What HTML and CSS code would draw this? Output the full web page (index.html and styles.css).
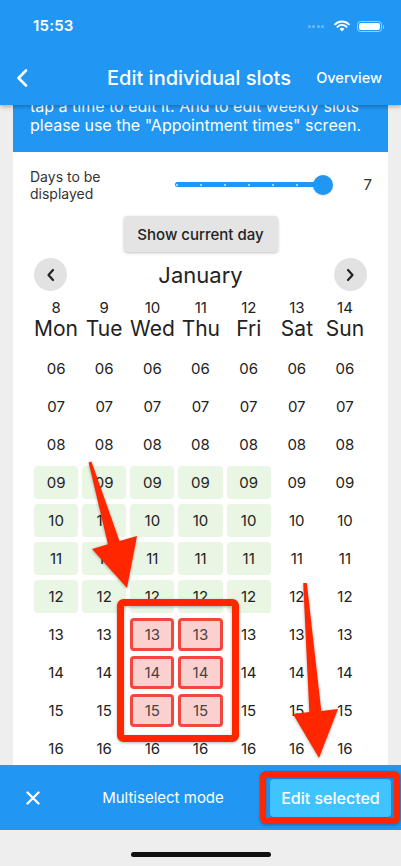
FILE: index.html
```html
<!DOCTYPE html>
<html lang="en">
<head>
    <meta charset="UTF-8">
    <meta name="viewport" content="width=device-width, initial-scale=1.0">
    <title>Edit individual slots</title>
    <link rel="stylesheet" href="styles.css">
</head>
<body>
    <header class="topbar">
        <div class="status">
            <span class="clock">15:53</span>
            <div class="status-icons">
                <span class="signal"><i></i><i></i><i></i><i></i></span>
                <svg class="wifi" width="16" height="12" viewBox="0 0 16 12">
                    <path d="M8 11.5 L5.6 9 A3.4 3.4 0 0 1 10.4 9 Z" fill="#fff"/>
                    <path d="M3.4 6.8 A6.5 6.5 0 0 1 12.6 6.8" stroke="#fff" stroke-width="1.9" fill="none" stroke-linecap="round"/>
                    <path d="M1.1 4.3 A9.8 9.8 0 0 1 14.9 4.3" stroke="#fff" stroke-width="1.9" fill="none" stroke-linecap="round"/>
                </svg>
                <span class="battery"><i></i></span>
            </div>
        </div>
        <div class="toolbar">
            <svg class="back" width="12" height="18" viewBox="0 0 12 18">
                <path d="M10 1.5 L2.5 9 L10 16.5" stroke="#fff" stroke-width="2.6" fill="none" stroke-linecap="round" stroke-linejoin="round"/>
            </svg>
            <h1>Edit individual slots</h1>
            <span class="overview">Overview</span>
        </div>
    </header>

    <main class="content">
        <div class="card">
            <div class="notice">
                Here you can see the slots for single days,<br>
                tap a time to edit it. And to edit weekly slots<br>
                please use the "Appointment times" screen.
            </div>

            <div class="days-setting">
                <span class="days-label">Days to be<br>displayed</span>
                <div class="slider">
                    <div class="track">
                        <i></i><i></i><i></i><i></i><i></i><i></i><i></i>
                    </div>
                </div>
                <span class="days-value">7</span>
            </div>

            <div class="today-row">
                <button class="today-btn">Show current day</button>
            </div>

            <div class="month-row">
                <span class="round-btn">
                    <svg width="10" height="14" viewBox="0 0 10 14"><path d="M7 2 L2.5 7 L7 12" stroke="#222" stroke-width="2.2" fill="none" stroke-linecap="round" stroke-linejoin="round"/></svg>
                </span>
                <span class="month">January</span>
                <span class="round-btn">
                    <svg width="10" height="14" viewBox="0 0 10 14"><path d="M3 2 L7.5 7 L3 12" stroke="#222" stroke-width="2.2" fill="none" stroke-linecap="round" stroke-linejoin="round"/></svg>
                </span>
            </div>

            <div class="week">
                <div class="day"><span class="num">8</span><span class="name">Mon</span></div>
                <div class="day"><span class="num">9</span><span class="name">Tue</span></div>
                <div class="day"><span class="num">10</span><span class="name">Wed</span></div>
                <div class="day"><span class="num">11</span><span class="name">Thu</span></div>
                <div class="day"><span class="num">12</span><span class="name">Fri</span></div>
                <div class="day"><span class="num">13</span><span class="name">Sat</span></div>
                <div class="day"><span class="num">14</span><span class="name">Sun</span></div>
            </div>

            <div class="slots">
                <span class="slot">06</span><span class="slot">06</span><span class="slot">06</span><span class="slot">06</span><span class="slot">06</span><span class="slot">06</span><span class="slot">06</span>
                <span class="slot">07</span><span class="slot">07</span><span class="slot">07</span><span class="slot">07</span><span class="slot">07</span><span class="slot">07</span><span class="slot">07</span>
                <span class="slot">08</span><span class="slot">08</span><span class="slot">08</span><span class="slot">08</span><span class="slot">08</span><span class="slot">08</span><span class="slot">08</span>
                <span class="slot open">09</span><span class="slot open">09</span><span class="slot open">09</span><span class="slot open">09</span><span class="slot open">09</span><span class="slot">09</span><span class="slot">09</span>
                <span class="slot open">10</span><span class="slot open">10</span><span class="slot open">10</span><span class="slot open">10</span><span class="slot open">10</span><span class="slot">10</span><span class="slot">10</span>
                <span class="slot open">11</span><span class="slot open">11</span><span class="slot open">11</span><span class="slot open">11</span><span class="slot open">11</span><span class="slot">11</span><span class="slot">11</span>
                <span class="slot open">12</span><span class="slot open">12</span><span class="slot open">12</span><span class="slot open">12</span><span class="slot open">12</span><span class="slot">12</span><span class="slot">12</span>
                <span class="slot">13</span><span class="slot">13</span><span class="slot picked">13</span><span class="slot picked">13</span><span class="slot">13</span><span class="slot">13</span><span class="slot">13</span>
                <span class="slot">14</span><span class="slot">14</span><span class="slot picked">14</span><span class="slot picked">14</span><span class="slot">14</span><span class="slot">14</span><span class="slot">14</span>
                <span class="slot">15</span><span class="slot">15</span><span class="slot picked">15</span><span class="slot picked">15</span><span class="slot">15</span><span class="slot">15</span><span class="slot">15</span>
                <span class="slot">16</span><span class="slot">16</span><span class="slot">16</span><span class="slot">16</span><span class="slot">16</span><span class="slot">16</span><span class="slot">16</span>
                <span class="slot">17</span><span class="slot">17</span><span class="slot">17</span><span class="slot">17</span><span class="slot">17</span><span class="slot">17</span><span class="slot">17</span>
            </div>
        </div>
    </main>

    <footer class="multibar">
        <svg class="close" width="14" height="14" viewBox="0 0 14 14">
            <path d="M1.5 1.5 L12.5 12.5 M12.5 1.5 L1.5 12.5" stroke="#fff" stroke-width="2.3" stroke-linecap="round"/>
        </svg>
        <span class="mode">Multiselect mode</span>
        <button class="edit-btn">Edit selected</button>
    </footer>
    <div class="home"><span class="home-bar"></span></div>

    <!-- screenshot annotations drawn on top -->
    <svg class="marks" width="401" height="866" viewBox="0 0 401 866">
        <rect x="120.5" y="602.5" width="115" height="136" rx="3" fill="none" stroke="#ff2600" stroke-width="7"/>
        <rect x="263" y="774" width="134" height="47" rx="3" fill="none" stroke="#ff2600" stroke-width="6"/>
        <polygon points="88.6,462.4 107.9,544.3 92,549 127,588 137,536 119.5,540.9 91.4,461.6" fill="#ff2600"/>
        <polygon points="303.2,583.1 309.3,712 293,714 319,758 338,709 321.3,711 306.8,582.9" fill="#ff2600"/>
    </svg>
</body>
</html>
```

FILE: styles.css
```css
* {
    box-sizing: border-box;
}
body {
    margin: 0;
    width: 401px;
    height: 866px;
    overflow: hidden;
    display: flex;
    flex-direction: column;
    background-color: #eeeeee;
    font-family: 'Inter', 'Roboto', sans-serif;
    color: #222;
    position: relative;
}
.topbar {
    height: 105px;
    flex: none;
    background-color: #2196F3;
    color: white;
    box-shadow: 0 2px 4px rgba(0,0,0,0.25);
    position: relative;
    z-index: 2;
}
.status {
    height: 50px;
    display: flex;
    align-items: center;
    justify-content: space-between;
    padding: 0 19px 0 33px;
}
.clock {
    font-size: 15px;
    font-weight: 600;
    letter-spacing: 0.2px;
}
.status-icons {
    display: flex;
    align-items: center;
    gap: 7px;
    padding-top: 2px;
}
.signal {
    display: flex;
    gap: 1.5px;
    margin-right: 3px;
}
.signal i {
    width: 3px;
    height: 3px;
    border-radius: 50%;
    background-color: rgba(255,255,255,0.35);
}
.battery {
    width: 25px;
    height: 11px;
    border: 1px solid rgba(255,255,255,0.55);
    border-radius: 3.5px;
    padding: 1px;
    display: flex;
    position: relative;
}
.battery i {
    flex: 1;
    background-color: white;
    border-radius: 2px;
}
.battery::after {
    content: "";
    position: absolute;
    right: -3px;
    top: 3px;
    width: 1.5px;
    height: 4px;
    border-radius: 0 1px 1px 0;
    background-color: rgba(255,255,255,0.55);
}
.toolbar {
    height: 55px;
    display: grid;
    grid-template-columns: 1fr auto 1fr;
    align-items: center;
    padding: 0 19px 0 16px;
}
.toolbar h1 {
    margin: 0;
    font-size: 20px;
    font-weight: 500;
}
.overview {
    justify-self: end;
    font-size: 14.5px;
    font-weight: 500;
}
.content {
    flex: 1;
    overflow: hidden;
    padding: 0 13px;
}
.card {
    margin-top: -44px;
    background-color: white;
}
.notice {
    background-color: #2196F3;
    color: white;
    font-size: 16px;
    line-height: 19.5px;
    padding: 16px 17px;
    white-space: nowrap;
}
.days-setting {
    display: flex;
    align-items: center;
    padding: 16px 16px 0 17px;
}
.days-label {
    width: 125px;
    font-size: 14px;
    line-height: 17px;
    color: #333;
}
.slider {
    flex: 1;
    padding: 0 19px 0 20px;
}
.track {
    height: 5px;
    border-radius: 3px;
    background-color: #2196F3;
    display: flex;
    align-items: center;
    justify-content: space-between;
    padding: 0 1px;
    position: relative;
}
.track i {
    width: 2px;
    height: 2px;
    border-radius: 50%;
    background-color: rgba(255,255,255,0.8);
}
.track::after {
    content: "";
    position: absolute;
    right: -10px;
    top: -7.5px;
    width: 20px;
    height: 20px;
    border-radius: 50%;
    background-color: #2196F3;
    box-shadow: 0 1px 2px rgba(0,0,0,0.15);
}
.days-value {
    width: 30px;
    text-align: right;
    font-size: 15px;
    color: #333;
}
.today-row {
    display: flex;
    justify-content: center;
    padding-top: 14.5px;
}
.today-btn {
    width: 154px;
    height: 36px;
    border: none;
    border-radius: 4px;
    background-color: #e4e4e4;
    box-shadow: 0 1px 3px rgba(0,0,0,0.25);
    font-family: inherit;
    font-size: 15px;
    font-weight: 500;
    color: #222;
}
.month-row {
    display: flex;
    align-items: center;
    justify-content: space-between;
    padding: 6px 21px 0;
}
.round-btn {
    width: 33px;
    height: 33px;
    border-radius: 50%;
    background-color: #e2e2e2;
    display: flex;
    align-items: center;
    justify-content: center;
}
.month {
    font-size: 22px;
    color: #222;
}
.week {
    display: grid;
    grid-template-columns: repeat(7, 1fr);
    column-gap: 4px;
    padding: 8px 21px 0;
}
.day {
    display: flex;
    flex-direction: column;
    align-items: center;
}
.num {
    font-size: 15px;
    line-height: 18px;
}
.name {
    font-size: 21px;
    line-height: 24px;
    font-weight: 400;
}
.slots {
    display: grid;
    grid-template-columns: repeat(7, 1fr);
    grid-auto-rows: 33px;
    column-gap: 4px;
    row-gap: 5px;
    padding: 10.5px 21px 0;
}
.slot {
    display: flex;
    align-items: center;
    justify-content: center;
    font-size: 15px;
    border-radius: 4px;
}
.slot.open {
    background-color: #e8f6e3;
}
.slot.picked {
    background-color: #fdd0d0;
    border: 3px solid #f2473e;
    color: #444;
}
.multibar {
    height: 65px;
    flex: none;
    background-color: #2196F3;
    display: flex;
    align-items: center;
    padding: 0 10px 0 26px;
    color: white;
}
.mode {
    flex: 1;
    text-align: center;
    padding-left: 16px;
    font-size: 15px;
    font-weight: 400;
}
.edit-btn {
    width: 121px;
    height: 38px;
    border: none;
    border-radius: 4px;
    background-color: #40C4FF;
    color: white;
    font-family: inherit;
    font-size: 16px;
    font-weight: 500;
    box-shadow: 0 1px 3px rgba(0,0,0,0.25);
}
.home {
    height: 36px;
    flex: none;
    display: flex;
    justify-content: center;
    padding-top: 22px;
}
.home-bar {
    width: 140px;
    height: 5px;
    border-radius: 3px;
    background-color: #111;
}
.marks {
    position: absolute;
    left: 0;
    top: 0;
    pointer-events: none;
    z-index: 5;
    filter: drop-shadow(0 1px 1.5px rgba(0,0,0,0.3));
}
```
